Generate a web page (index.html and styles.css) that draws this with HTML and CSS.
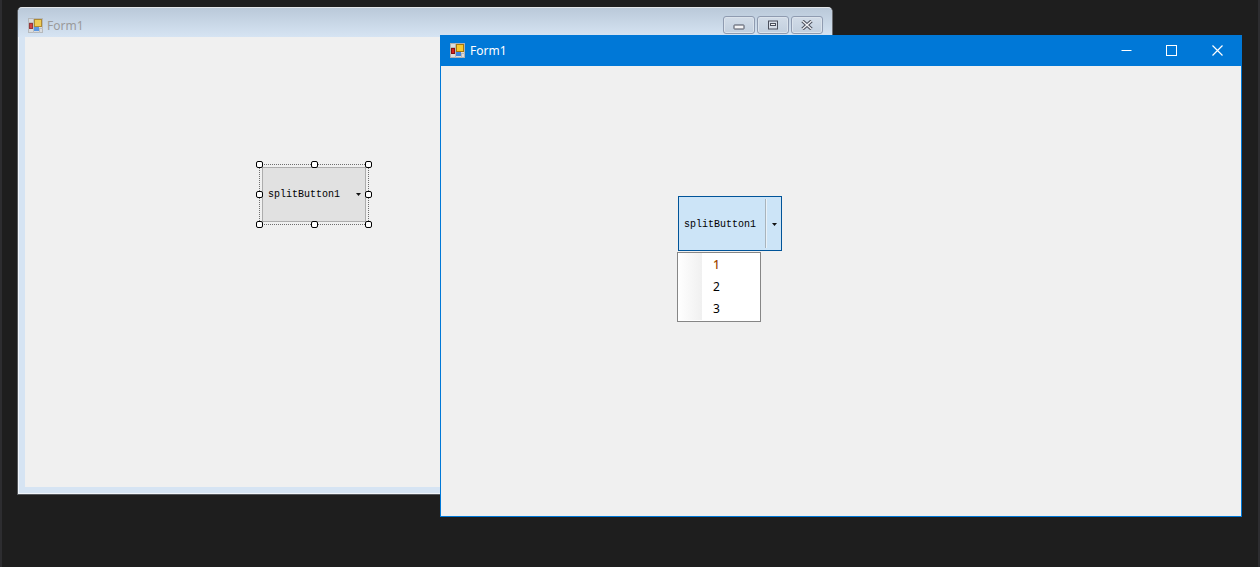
FILE: index.html
```html
<!DOCTYPE html>
<html lang="en">
<head>
<meta charset="utf-8">
<title>Form1</title>
<link rel="stylesheet" href="styles.css">
</head>
<body>
<div class="desktop">
  <section class="designer">
    <header class="aero-title">
      <svg class="form-icon dim" width="15" height="15" viewBox="0 0 15 15"><use href="#formicon"/></svg>
      <span class="aero-text">Form1</span>
      <div class="aero-buttons">
        <button class="aero-btn"><svg class="min-glyph" width="12" height="6" viewBox="0 0 12 6"><rect x="1" y="1" width="10" height="4" rx=".5" fill="#f4f4f6" stroke="#4a4f5c"/></svg></button>
        <button class="aero-btn"><svg width="12" height="10" viewBox="0 0 12 10"><rect x="1.5" y="1" width="9" height="8" fill="#d6dde8" stroke="#4a4f5c" stroke-width="1"/><rect x="3.5" y="3.5" width="5" height="2" fill="#f4f4f6" stroke="#4a4f5c" stroke-width="1"/></svg></button>
        <button class="aero-btn"><svg width="12" height="10" viewBox="0 0 12 10"><path d="M1.5 1 L10.5 9 M10.5 1 L1.5 9" stroke="#4a4f5c" stroke-width="3.4" fill="none"/><path d="M1.5 1 L10.5 9 M10.5 1 L1.5 9" stroke="#f2f3f6" stroke-width="1.4" fill="none"/></svg></button>
      </div>
    </header>
    <div class="designer-client">
      <div class="selection">
        <div class="design-split">
          <span class="split-label">splitButton1</span>
          <svg class="arrow" width="5" height="3" viewBox="0 0 5 3"><path d="M0 0H5L2.5 3Z" fill="#111"/></svg>
        </div>
        <i class="handle h-tl"></i><i class="handle h-tc"></i><i class="handle h-tr"></i>
        <i class="handle h-ml"></i><i class="handle h-mr"></i>
        <i class="handle h-bl"></i><i class="handle h-bc"></i><i class="handle h-br"></i>
      </div>
    </div>
  </section>

  <section class="runtime">
    <header class="win-title">
      <svg class="form-icon" width="15" height="15" viewBox="0 0 15 15"><use href="#formicon"/></svg>
      <span class="win-text">Form1</span>
      <div class="win-buttons">
        <span class="win-btn"><svg width="11" height="11" viewBox="0 0 11 11"><path d="M0.5 5.5H10.5" stroke="#fff"/></svg></span>
        <span class="win-btn"><svg width="11" height="11" viewBox="0 0 11 11"><rect x="0.5" y="0.5" width="10" height="10" fill="none" stroke="#fff"/></svg></span>
        <span class="win-btn"><svg width="11" height="11" viewBox="0 0 11 11"><path d="M0.5 0.5L10.5 10.5M10.5 0.5L0.5 10.5" stroke="#fff" stroke-width="1.2"/></svg></span>
      </div>
    </header>
    <div class="runtime-client">
      <div class="run-split">
        <span class="split-label">splitButton1</span>
        <span class="run-divider"></span>
        <svg class="arrow" width="5" height="3" viewBox="0 0 5 3"><path d="M0 0H5L2.5 3Z" fill="#111"/></svg>
      </div>
      <ul class="menu">
        <li class="menu-item first">1</li>
        <li class="menu-item">2</li>
        <li class="menu-item">3</li>
      </ul>
    </div>
  </section>
</div>
<svg class="defs" width="0" height="0">
  <defs>
    <g id="formicon">
      <rect x="0.5" y="0.5" width="14" height="14" fill="#dcdcdc" stroke="#b0b0b0"/>
      <path d="M5.5 0V15M0 4.5H5M0 10.5H15M11.5 10V15" stroke="#b8b8b8" stroke-width="1" fill="none"/>
      <rect x="6.5" y="1.5" width="7" height="7" fill="#f8c92f" stroke="#a87808"/>
      <rect x="1.5" y="5.5" width="3" height="5" fill="#d8201c" stroke="#8a1010"/>
      <rect x="6" y="9" width="5" height="4" fill="#3f86e0"/>
    </g>
  </defs>
</svg>
</body>
</html>
```
FILE: styles.css
```css
* { box-sizing: border-box; }
html, body { margin: 0; padding: 0; }
body { background: #1e1e1e; overflow: hidden; }

.desktop {
  position: relative;
  width: 1260px;
  height: 567px;
  background: #1e1e1e;
  border-left: 2px solid #2d2d30;
  border-right: 2px solid #2d2d30;
  font-family: "Noto Sans", "Open Sans", sans-serif;
}
.defs { position: absolute; }

/* design-time window */
.designer {
  position: absolute;
  left: 15px;
  top: 7px;
  width: 816px;
  height: 488px;
  display: flex;
  flex-direction: column;
  background: #d6e4f3;
  border: 1px solid #55585c;
  border-top-color: #e4e7ea;
  border-right-color: #6a6c70;
  border-radius: 5px 5px 0 0;
  box-shadow: inset 1px 0 0 #f1f5fa, inset -1px 0 0 #f1f5fa, inset 0 -1px 0 #f1f5fa;
}
.aero-title {
  height: 29px;
  display: flex;
  align-items: center;
  padding: 5px 9px 0 10px;
  background: linear-gradient(#bac9d9, #d6e4f3);
  border-radius: 4px 4px 0 0;
  flex: none;
}
.form-icon { flex: none; display: block; }
.form-icon.dim { opacity: .8; }
.aero-text {
  margin-left: 4px;
  font-size: 12px;
  color: #9a9a9a;
}
.aero-buttons { margin-left: auto; display: flex; gap: 2px; }
.aero-btn {
  width: 32px;
  height: 18px;
  padding: 0;
  display: flex;
  align-items: center;
  justify-content: center;
  background: linear-gradient(#d2dce8, #c2cfde);
  border: 1px solid #8f9bb0;
  border-radius: 3px;
  box-shadow: inset 0 0 0 1px #dbe3ec;
}
.min-glyph { margin-top: 4px; }
.designer-client {
  flex: 1;
  margin: 0 0 7px 7px;
  background: #f0f0f0;
  position: relative;
}

.selection {
  position: absolute;
  left: 234px;
  top: 127px;
  width: 110px;
  height: 61px;
  border: 1px dotted #6e6e6e;
  padding: 2px;
}
.design-split {
  width: 104px;
  height: 55px;
  display: flex;
  align-items: center;
  justify-content: space-between;
  padding: 0 4px 0 5px;
  background: #e1e1e1;
  border: 1px solid #adadad;
}
.split-label {
  font-family: "Liberation Mono", monospace;
  font-size: 10px;
  line-height: 12px;
  color: #000;
  margin-top: 1px;
}
.arrow { flex: none; display: block; }
.handle {
  position: absolute;
  width: 7px;
  height: 7px;
  background: #fff;
  border: 1px solid #000;
  border-radius: 2px;
}
.h-tl { left: -4px; top: -4px; }
.h-tc { left: 51px; top: -4px; }
.h-tr { left: 105px; top: -4px; }
.h-ml { left: -4px; top: 26px; }
.h-mr { left: 105px; top: 26px; }
.h-bl { left: -4px; top: 56px; }
.h-bc { left: 51px; top: 56px; }
.h-br { left: 105px; top: 56px; }

/* running window */
.runtime {
  position: absolute;
  left: 438px;
  top: 35px;
  width: 802px;
  height: 482px;
  display: flex;
  flex-direction: column;
  background: #f0f0f0;
  border: 1px solid #0078d7;
}
.win-title {
  height: 30px;
  flex: none;
  display: flex;
  align-items: center;
  padding: 0 1px 1px 9px;
  background: #0078d7;
}
.win-text {
  margin-left: 5px;
  font-size: 12px;
  color: #fff;
}
.win-buttons { margin-left: auto; display: flex; }
.win-btn {
  width: 45px;
  height: 29px;
  display: flex;
  align-items: center;
  justify-content: center;
}
.win-btn:last-child { margin-left: 1px; }
.runtime-client { flex: 1; position: relative; }
.run-split {
  position: absolute;
  left: 237px;
  top: 130px;
  width: 104px;
  height: 55px;
  display: flex;
  align-items: center;
  padding-left: 5px;
  background: #cce4f7;
  border: 1px solid #005499;
}
.run-split .split-label { margin-top: 2px; }
.run-divider {
  width: 2px;
  height: 49px;
  margin-left: 9px;
  background: #a9b4bc;
  border-right: 1px solid #e8f1f8;
}
.run-split .arrow { margin: 1px 0 0 5px; }
.menu {
  position: absolute;
  left: 236px;
  top: 186px;
  width: 84px;
  height: 70px;
  margin: 0;
  padding: 1px 1px 1px 25px;
  list-style: none;
  background-color: #fff;
  background-image: linear-gradient(90deg, #fff 0, #f0f0f0 24px);
  background-size: 24px 67px;
  background-repeat: no-repeat;
  background-position: 0 0;
  border: 1px solid #868686;
}
.menu-item {
  height: 22px;
  line-height: 22px;
  padding-left: 10px;
  font-size: 12px;
  color: #000;
}
.menu-item.first { color: #a04a00; font-weight: 500; }
```
